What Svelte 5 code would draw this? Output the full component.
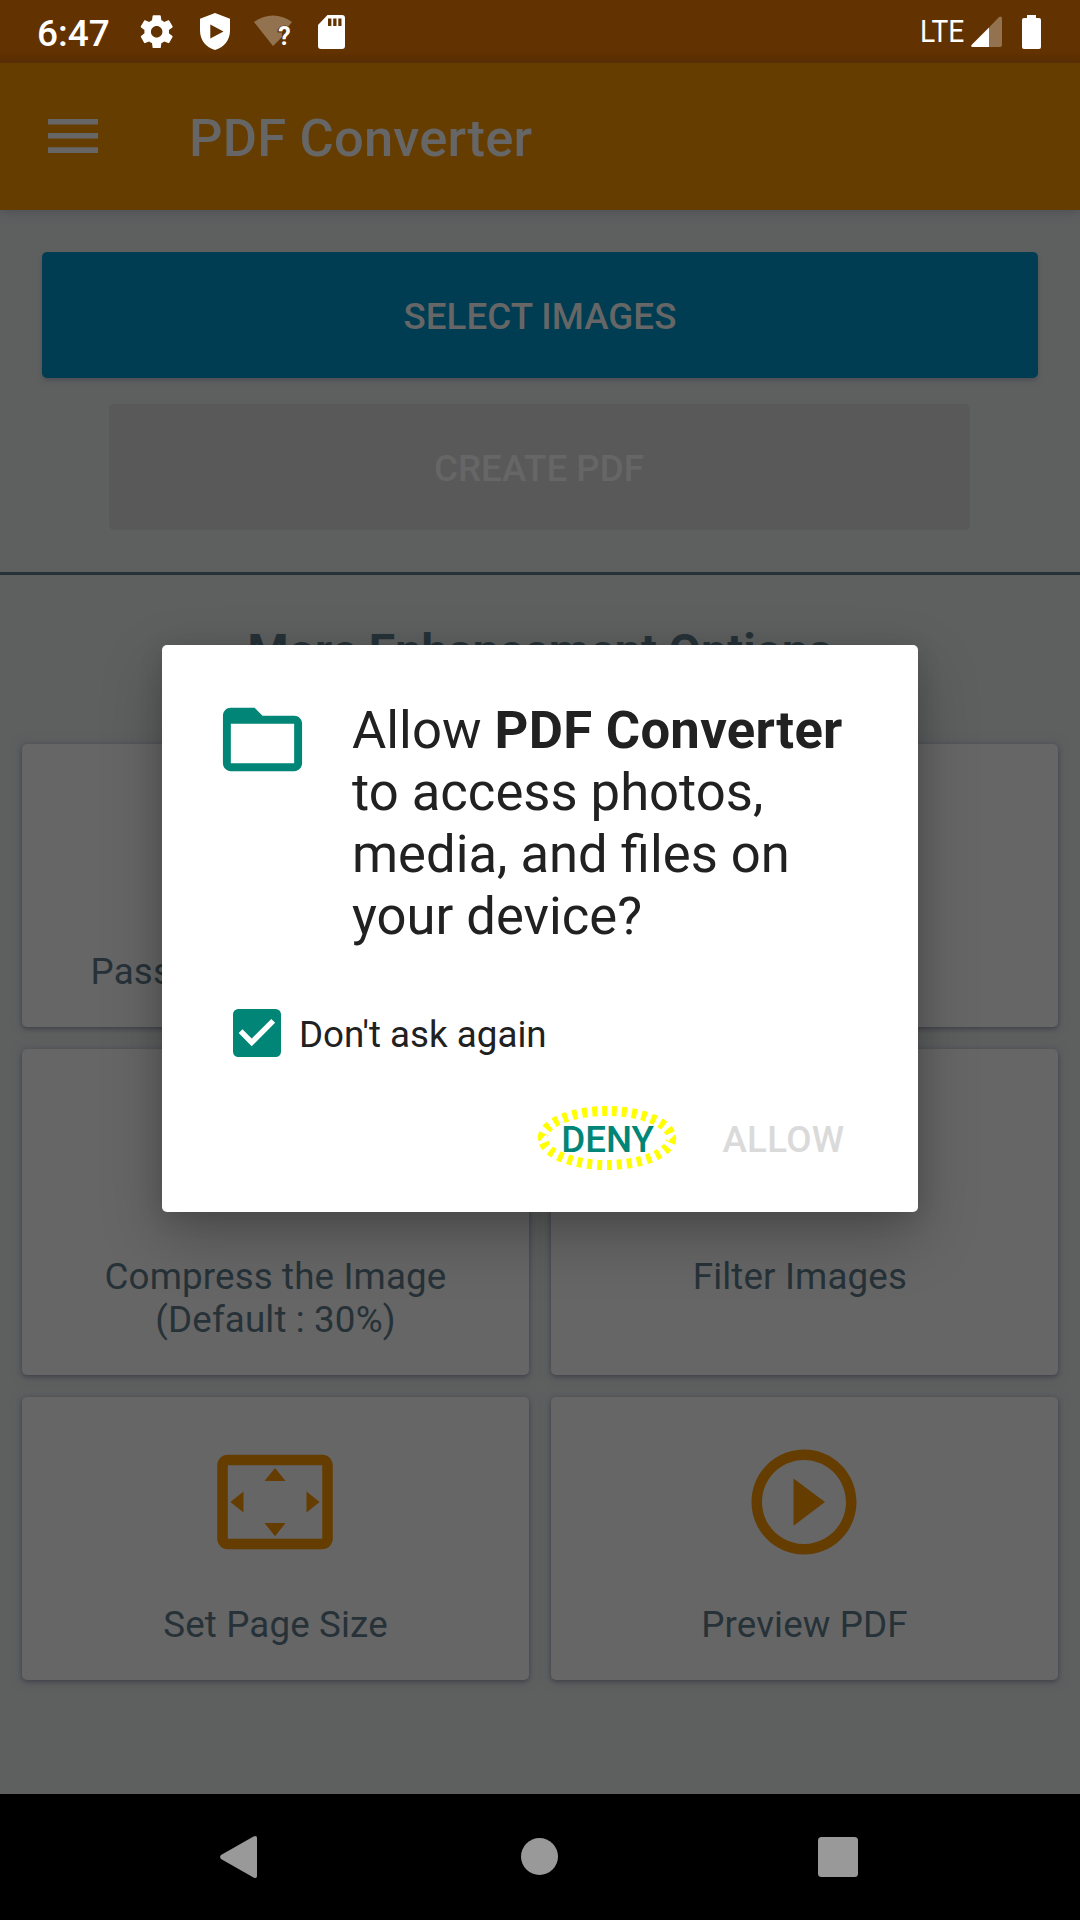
<script>
  const overscan =
    'M12.01 5.5L10 8h4l-1.99-2.5zM18 10v4l2.5-1.99L18 10zM6 10l-2.5 2.01L6 14v-4zm8 6h-4l2.01 2.5L14 16zm7-13H3c-1.1 0-2 .9-2 2v14c0 1.1.9 2 2 2h18c1.1 0 2-.9 2-2V5c0-1.1-.9-2-2-2zm0 16.01H3V4.99h18v14.02z';
  const playCircle =
    'M10 16.5l6-4.5-6-4.5v9zM12 2C6.48 2 2 6.48 2 12s4.48 10 10 10 10-4.48 10-10S17.52 2 12 2zm0 18c-4.41 0-8-3.59-8-8s3.59-8 8-8 8 3.59 8 8-3.59 8-8 8z';

  const options = [
    { lines: ['Password Protect PDF'] },
    { lines: [] },
    { lines: ['Compress the Image', '(Default : 30%)'], tall: true },
    { lines: ['Filter Images\u00a0'], tall: true },
    { lines: ['Set Page Size'], icon: overscan },
    { lines: ['Preview PDF'], icon: playCircle }
  ];

  let dontAsk = $state(true);
</script>

<div class="screen">
  <header class="status">
    <div class="status-left">
      <span class="clock">6:47</span>
      <svg class="gear" viewBox="0 0 24 24"><path d="M19.43 12.98c.04-.32.07-.64.07-.98s-.03-.66-.07-.98l2.11-1.65c.19-.15.24-.42.12-.64l-2-3.46c-.12-.22-.39-.3-.61-.22l-2.49 1c-.52-.4-1.08-.73-1.69-.98l-.38-2.65C14.46 2.18 14.25 2 14 2h-4c-.25 0-.46.18-.49.42l-.38 2.65c-.61.25-1.17.59-1.69.98l-2.49-1c-.23-.09-.49 0-.61.22l-2 3.46c-.13.22-.07.49.12.64l2.11 1.65c-.04.32-.07.65-.07.98s.03.66.07.98l-2.11 1.65c-.19.15-.24.42-.12.64l2 3.46c.12.22.39.3.61.22l2.49-1c.52.4 1.08.73 1.69.98l.38 2.65c.03.24.24.42.49.42h4c.25 0 .46-.18.49-.42l.38-2.65c.61-.25 1.17-.59 1.69-.98l2.49 1c.23.09.49 0 .61-.22l2-3.46c.12-.22.07-.49-.12-.64l-2.11-1.65zM12 15.5c-1.93 0-3.5-1.57-3.5-3.5s1.57-3.5 3.5-3.5 3.5 1.57 3.5 3.5-1.57 3.5-3.5 3.5z" /></svg>
      <svg class="shield" viewBox="0 0 30 37"><path fill-rule="evenodd" d="M15 0L30 5.7V17.5C30 27 24 34.5 15 37C6 34.5 0 27 0 17.5V5.7ZM10.3 11.5V25.5L23.5 18.5Z" /></svg>
      <svg class="wifi" viewBox="0 0 38 34">
        <path class="faint" d="M0 7C11 -1.8 27 -1.8 38 7L34.5 11.3C29 9 23 12 23.4 17.5H28V22L19 31Z" />
        <text x="24.2" y="29.5">?</text>
      </svg>
      <svg class="sd" viewBox="0 0 27 34"><path fill-rule="evenodd" d="M9.5 0H24Q27 0 27 3V31Q27 34 24 34H3Q0 34 0 31V10ZM10 3.5V11H13.4V3.5ZM15.2 3.5V11H18.5V3.5ZM20.3 3.5V11H23.5V3.5Z" /></svg>
    </div>
    <div class="status-right">
      <span class="lte">LTE</span>
      <svg class="signal" viewBox="0 0 31 31">
        <path class="faint" d="M18 11.5L27.6 1.6Q31 -1 31 3V29Q31 31 29 31H18Z" />
        <path d="M18 11.5V31H1.5Q-1 30.5 1 28.5Z" />
      </svg>
      <svg class="battery" viewBox="0 0 19 34"><path d="M5 0H14V3H17Q19 3 19 5V32Q19 34 17 34H2Q0 34 0 32V5Q0 3 2 3H5Z" /></svg>
    </div>
  </header>

  <div class="appbar">
    <svg class="burger" viewBox="0 0 50 34"><path d="M0 0H50V5.5H0ZM0 14H50V19.5H0ZM0 28.3H50V34H0Z" /></svg>
    <h1>PDF Converter</h1>
  </div>

  <main>
    <div class="actions">
      <button class="select">SELECT IMAGES</button>
      <button class="create" disabled>CREATE PDF</button>
    </div>
    <hr />
    <h2>More Enhancement Options</h2>
    <div class="grid">
      {#each options as option}
        <div class="card" class:tall={option.tall}>
          <div class="icon">
            {#if option.icon}
              <svg viewBox="0 0 24 24"><path d={option.icon} /></svg>
            {/if}
          </div>
          <div class="label">
            {#each option.lines as line}
              <div>{line}</div>
            {/each}
          </div>
        </div>
      {/each}
    </div>
  </main>

  <nav>
    <svg class="back" viewBox="0 0 37 42"><path d="M1 19L33.5 .6Q37 -1 37 2V40Q37 43 33.5 41.4L1 23Q-.8 21 1 19Z" /></svg>
    <svg class="home" viewBox="0 0 37 37"><circle cx="18.5" cy="18.5" r="18.5" /></svg>
    <svg class="recents" viewBox="0 0 40 40"><rect width="40" height="40" rx="3.5" /></svg>
  </nav>

  <div class="overlay">
    <div class="dialog">
      <div class="message">
        <svg class="folder" viewBox="0 0 24 24"><path d="M20 6h-8l-2-2H4c-1.1 0-1.99.9-1.99 2L2 18c0 1.1.9 2 2 2h16c1.1 0 2-.9 2-2V8c0-1.1-.9-2-2-2zm0 12H4V8h16v10z" /></svg>
        <p>Allow <b>PDF Converter</b><br />to access photos,<br />media, and files on<br />your device?</p>
      </div>
      <button class="ask" onclick={() => (dontAsk = !dontAsk)}>
        <svg viewBox="0 0 48 48">
          <rect width="48" height="48" rx="5.3" />
          {#if dontAsk}
            <polyline points="7.6,22.2 18.7,33.4 40.2,11.9" />
          {/if}
        </svg>
        <span>Don't ask again</span>
      </button>
      <div class="buttons">
        <button class="deny">
          DENY
          <svg class="ring" viewBox="0 0 140 66"><ellipse cx="70" cy="33" rx="64.3" ry="27" pathLength="300" /></svg>
        </button>
        <button class="allow" disabled>ALLOW</button>
      </div>
    </div>
  </div>
</div>

<style>
  :global(body) { margin: 0; background: #5e6060; }
  .screen {
    position: relative;
    width: 1080px;
    height: 1920px;
    display: flex;
    flex-direction: column;
    overflow: hidden;
    background: #5e6060;
    font-family: Roboto, sans-serif;
  }
  svg { display: block; flex: none; overflow: visible; }
  button { font: inherit; border: 0; padding: 0; margin: 0; background: none; }

  .status {
    height: 63px;
    flex: none;
    display: flex;
    justify-content: space-between;
    background: linear-gradient(#623200 52px, #5a2d00);
    color: #fff;
    fill: #fff;
  }
  .status-left { display: flex; align-items: center; padding-left: 37px; }
  .clock { width: 100px; font-size: 37px; font-weight: 500; line-height: 44px; padding-top: 4px; }
  .gear { width: 39.4px; height: 39.4px; }
  .shield { width: 30px; height: 37px; margin-left: 23.5px; }
  .wifi { width: 38px; height: 34px; margin-left: 24px; }
  .wifi text { font-size: 25px; font-weight: 700; }
  .faint { fill: #93734f; }
  .sd { width: 27px; height: 34px; margin-left: 26.5px; }
  .status-right { display: flex; align-items: center; padding-right: 39px; }
  .lte {
    font-size: 32px;
    line-height: 38px;
    margin-right: 7px;
    padding-bottom: 2px;
    transform: scaleX(0.88);
    transform-origin: right center;
  }
  .signal { width: 31px; height: 31px; margin-right: 20px; }
  .battery { width: 19px; height: 34px; }

  .appbar {
    height: 147px;
    flex: none;
    display: flex;
    align-items: center;
    background: #663d00;
    color: #666;
    fill: #666;
    box-shadow: 0 3px 10px rgba(60, 60, 75, 0.4);
  }
  .burger { width: 50px; height: 34px; margin: 0 0 1px 48px; }
  h1 { margin: 2px 0 0 91px; font-size: 52.5px; line-height: 62px; font-weight: 500; letter-spacing: 0.19px; }

  main { flex: 1; display: flex; flex-direction: column; }
  .actions { display: flex; flex-direction: column; align-items: center; gap: 26px; padding: 42px 0; }
  .actions button {
    box-sizing: border-box;
    height: 126px;
    padding-top: 2px;
    border-radius: 5px;
    font-size: 36.75px;
    font-weight: 500;
    color: #666;
  }
  .select { width: 996px; background: #003d52; box-shadow: 0 3px 4px rgba(70, 70, 80, 0.6); }
  .create { width: 861px; margin-right: 2px; background: #595959; }
  hr { width: 100%; height: 3px; margin: 0; border: 0; background: #263238; flex: none; }
  h2 {
    margin: 38px 0 55px;
    font-size: 46.9px;
    line-height: 76px;
    font-weight: 700;
    text-align: center;
    color: #263238;
  }
  .grid { display: grid; grid-template-columns: 1fr 1fr; gap: 22px; padding: 0 22px; }
  .card {
    box-sizing: border-box;
    height: 283px;
    padding-right: 2px;
    background: #666;
    border-radius: 5px;
    box-shadow: 0 2px 5px rgba(50, 50, 60, 0.6), 0 0 12px rgba(70, 70, 85, 0.35);
    display: flex;
    flex-direction: column;
    align-items: center;
  }
  .tall { height: 326px; }
  .icon { width: 126px; height: 126px; margin: 42px 0 38px; fill: #663d00; }
  .label {
    padding-left: 2px;
    font-size: 36.75px;
    line-height: 43px;
    letter-spacing: 0.13px;
    text-align: center;
    color: #263238;
    white-space: nowrap;
  }

  nav {
    box-sizing: border-box;
    height: 126px;
    padding-bottom: 1px;
    flex: none;
    display: flex;
    align-items: center;
    background: #000;
    fill: #999;
  }
  .back { width: 37px; height: 42px; margin-left: 220px; }
  .home { width: 37px; height: 37px; margin-left: 264px; }
  .recents { width: 40px; height: 40px; margin-left: 260px; }

  .overlay {
    position: absolute;
    inset: 63px 0 126px;
    display: flex;
    align-items: center;
    justify-content: center;
  }
  .dialog {
    box-sizing: border-box;
    width: 756px;
    height: 567px;
    padding: 47px 53px 0;
    border-radius: 5px;
    background: #fff;
    color: #212121;
    box-shadow: 0 24px 60px rgba(0, 0, 0, 0.25), 0 4px 24px rgba(0, 0, 0, 0.12);
  }
  .message { display: flex; gap: 42px; }
  .folder { width: 95px; height: 95px; fill: #008577; }
  p { margin: 6.5px 0 0; font-size: 52.6px; line-height: 62px; white-space: nowrap; }
  b { letter-spacing: 0.3px; }
  .ask { display: flex; align-items: center; margin: 62px 0 0 18px; color: inherit; }
  .ask svg { width: 48px; height: 48px; fill: #008577; }
  .ask polyline { fill: none; stroke: #fff; stroke-width: 5.4; }
  .ask span { margin: 2px 0 -2px 18px; font-size: 36.75px; line-height: 48px; }
  .buttons {
    display: flex;
    justify-content: flex-end;
    padding-right: 20.5px;
    margin-top: 59px;
    font-size: 36.75px;
    line-height: 48px;
    font-weight: 500;
  }
  .deny { position: relative; color: #008577; margin-right: 68.5px; }
  .allow { color: #dadada; letter-spacing: 0.3px; }
  .ring { position: absolute; left: -24.5px; top: -10.5px; width: 140px; height: 66px; }
  .ring ellipse { fill: none; stroke: #ff0; stroke-width: 10; stroke-dasharray: 5 5; }
</style>
